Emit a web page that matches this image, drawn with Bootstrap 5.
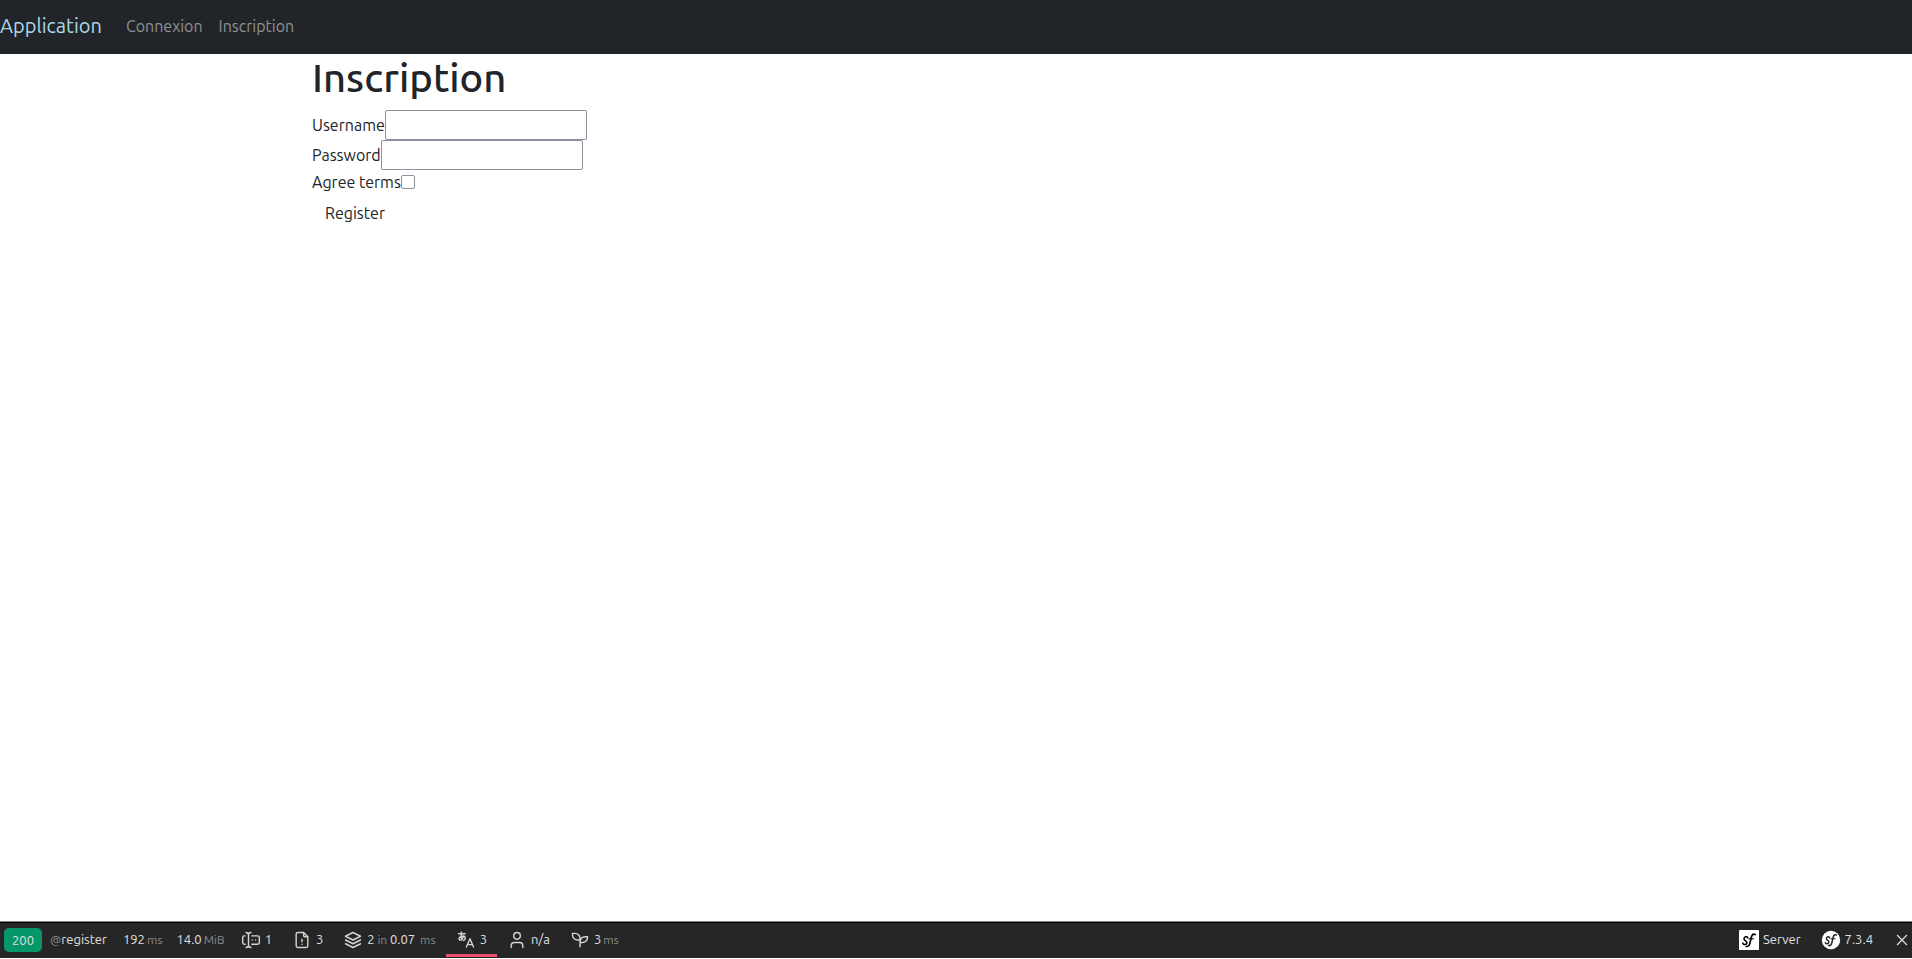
<!DOCTYPE html>
<html lang="fr">
<head>
<meta charset="utf-8">
<meta name="viewport" content="width=device-width, initial-scale=1">
<title>Inscription</title>
<link rel="stylesheet" href="https://cdn.jsdelivr.net/npm/bootstrap@5.3.0/dist/css/bootstrap.min.css">
<style>
body { font-family: Ubuntu, "Noto Sans", sans-serif; }
.site-nav { height: 54px; background: #212529; padding-bottom: 2px; }
.site-nav .navbar-brand { color: #add8e6; }
.site-nav .nav-link { color: #909294; }
h1 { font-size: 40px; line-height: 48px; }
.field-row input[type="text"], .field-row input[type="password"] { width: 202px; height: 30px; border: 1px solid #8f8f9d; border-radius: 2px; }
.field-row input[type="checkbox"] { appearance: none; width: 14px; height: 14px; border: 1px solid #8f8f9d; border-radius: 2px; background: #fff; }
.field-row input[type="checkbox"]:checked { background: #0d6efd; }
.debug-bar { height: 37px; background: #262626; border-top: 1px solid #858585; box-shadow: inset 0 1px #000; color: #e0e0e0; font-size: 13px; line-height: 35px; padding-bottom: 1px; margin-bottom: 1px; }
.debug-bar a { color: inherit; text-decoration: none; white-space: pre; }
.debug-bar .unit { color: #8c8c8c; font-size: 12px; }
.debug-bar .suffix { margin-left: 2px; }
.text-item { padding: 0 6px 0 8px; }
.icon-item { display: flex; align-items: center; gap: 4px; padding: 0 10px; }
.icon-item svg { flex: none; fill: none; stroke: #d4d4d4; stroke-width: 1.7; stroke-linecap: round; stroke-linejoin: round; }
.icon-item .sf-mark { stroke: none; }
.debug-bar .status-code { background: #059669; width: 38px; height: 24px; line-height: 24px; border-radius: 5px; text-align: center; }
.tab-warning { box-shadow: inset 0 -3px #e9506f; }
.close-button { width: 29px; color: #e0e0e0; }
</style>
</head>
<body class="d-flex flex-column min-vh-100">
<nav class="navbar navbar-expand site-nav pt-0">
  <a class="navbar-brand" href="#">Application</a>
  <div class="navbar-nav">
    <a class="nav-link" href="#">Connexion</a>
    <a class="nav-link" href="#">Inscription</a>
  </div>
</nav>
<main class="container px-3 flex-grow-1">
  <h1>Inscription</h1>
  <form>
    <div class="field-row d-flex align-items-center"><label for="username">Username</label><input type="text" id="username"></div>
    <div class="field-row d-flex align-items-center"><label for="password">Password</label><input type="password" id="password"></div>
    <div class="field-row d-flex align-items-center"><label for="agree">Agree terms</label><input type="checkbox" id="agree"></div>
    <button class="btn" type="submit">Register</button>
  </form>
</main>
<footer class="debug-bar d-flex">
  <a href="#" class="d-flex align-items-center ps-1 pe-2"><span class="status-code">200</span><span class="ps-2"><span class="unit">@</span>register</span></a>
  <a href="#" class="text-item">192<span class="unit suffix">ms</span></a>
  <a href="#" class="text-item">14.0<span class="unit suffix">MiB</span></a>
  <a href="#" class="icon-item"><svg width="20" height="20" viewBox="0 0 24 24"><path d="M5 7H4a2 2 0 0 0-2 2v6a2 2 0 0 0 2 2h1M13 7h7a2 2 0 0 1 2 2v6a2 2 0 0 1-2 2h-7M6 3a3 3 0 0 1 3 3v12a3 3 0 0 1-3 3M12 3a3 3 0 0 0-3 3v12a3 3 0 0 0 3 3M13.500 12v.01M17.500 12v.01"/></svg><span>1</span></a>
  <a href="#" class="icon-item"><svg width="20" height="20" viewBox="0 0 24 24"><path d="M14 3v4a1 1 0 0 0 1 1h4M17 21H7a2 2 0 0 1-2-2V5a2 2 0 0 1 2-2h7l5 5v11a2 2 0 0 1-2 2zM12 17v.01M12 11v3"/></svg><span>3</span></a>
  <a href="#" class="icon-item"><svg width="20" height="20" viewBox="0 0 24 24"><path d="M12 3 3 7.500 12 12l9-4.500zM3 12l9 4.500 9-4.500M3 16.500 12 21l9-4.500"/></svg><span>2<span class="unit"> in </span>0.07 <span class="unit suffix">ms</span></span></a>
  <a href="#" class="icon-item tab-warning"><svg width="20" height="20" viewBox="0 0 24 24"><path d="M3 4.500h8M6.500 2.500c-.5 4-.5 7 .5 9.500M9.500 7C8 10.500 6 12.500 4.500 12 2.500 11 3.500 7.500 8 7.500c4 0 4 4 1 5M12.500 20.500l4.250-10 4.250 10M14 17.500h5.500"/></svg><span>3</span></a>
  <a href="#" class="icon-item"><svg width="20" height="20" viewBox="0 0 24 24"><path d="M16 7a4 4 0 1 1-8 0 4 4 0 0 1 8 0M5 21v-2a4 4 0 0 1 4-4h6a4 4 0 0 1 4 4v2"/></svg><span>n/a</span></a>
  <a href="#" class="icon-item"><svg width="20" height="20" viewBox="0 0 24 24"><path d="M12 20V10a6 6 0 0 0-6-6H3v2a6 6 0 0 0 6 6h3M12 14a6 6 0 0 1 6-6h3v1a6 6 0 0 1-6 6h-3"/></svg><span>3<span class="unit suffix">ms</span></span></a>
  <a href="#" class="icon-item ms-auto"><svg class="sf-mark" width="20" height="20" viewBox="0 0 24 24"><rect width="24" height="24" rx="1" fill="#fff"/><path d="M10.500 9.500C10.500 7.500 6 7.500 6 10.500c0 2.500 4 2.500 3.500 5C9 18 5 18 4.500 15.800" fill="none" stroke="#000" stroke-width="1.900"/><path d="M8.500 19.500c3.500 1.500 4.500-2.500 5.500-7.500 1-5.500 2.500-8.500 5.500-6.500" fill="none" stroke="#000" stroke-width="2"/><path d="M12 10.500h5.500" stroke="#000" stroke-width="1.300"/></svg><span>Server</span></a>
  <a href="#" class="icon-item"><svg class="sf-mark" width="20" height="20" viewBox="0 0 24 24"><circle cx="12" cy="12" r="11" fill="#fff"/><path d="M10.500 9.500C10.500 7.500 6.500 7.500 6.500 10.200c0 2.300 3.500 2.300 3 4.500-.5 2.300-4 2.300-4.500.5" fill="none" stroke="#262626" stroke-width="1.700"/><path d="M9 18.500c3.200 1.300 4-2.200 4.800-6.500.9-4.800 2-7.500 4.700-6" fill="none" stroke="#262626" stroke-width="1.800"/><path d="M12 10.500h5" stroke="#262626" stroke-width="1.200"/></svg><span>7.3.4</span></a>
  <button type="button" class="close-button btn rounded-0 border-0 p-0 d-flex align-items-center justify-content-end pe-1" aria-label="Fermer"><svg width="12" height="12" viewBox="0 0 12 12"><path d="M1 1l10 10M11 1 1 11" stroke="#e0e0e0" stroke-width="1.200"/></svg></button>
</footer>
<script src="https://cdn.jsdelivr.net/npm/bootstrap@5.3.0/dist/js/bootstrap.bundle.min.js"></script>
</body>
</html>
